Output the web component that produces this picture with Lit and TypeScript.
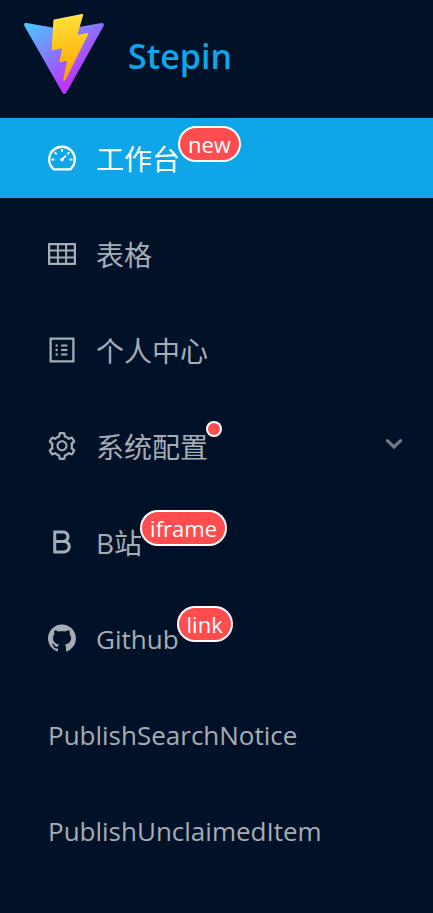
import { LitElement, html, css, svg, nothing } from "lit";
import { customElement, state } from "lit/decorators.js";
import { classMap } from "lit/directives/class-map.js";

interface MenuEntry {
  key: string;
  label: string;
  icon?: string;
  badge?: string;
  dot?: boolean;
  group?: boolean;
}

const ICONS: Record<string, string> = {
  dashboard:
    "M924.8 385.6a446.7 446.7 0 00-96-142.4 446.7 446.7 0 00-142.4-96C631.1 123.8 572.5 112 512 112s-119.1 11.8-174.4 35.2a446.7 446.7 0 00-142.4 96 446.7 446.7 0 00-96 142.4C75.8 440.9 64 499.5 64 560c0 132.7 58.3 257.7 159.9 343.1l1.7 1.4c5.8 4.8 13.1 7.5 20.6 7.5h531.7c7.5 0 14.8-2.7 20.6-7.5l1.7-1.4C901.7 817.7 960 692.7 960 560c0-60.5-11.9-119.1-35.2-174.4zM761.4 836H262.6A371.12 371.12 0 01140 560c0-99.4 38.7-192.8 109-263 70.3-70.3 163.7-109 263-109 99.4 0 192.8 38.7 263 109 70.3 70.3 109 163.7 109 263 0 105.6-44.5 205.5-122.6 276zM623.5 421.5a8.03 8.03 0 00-11.3 0L527.7 506c-18.7-5-39.4-.2-54.1 14.5a55.95 55.95 0 000 79.2 55.95 55.95 0 0079.2 0 55.87 55.87 0 0014.5-54.1l84.5-84.5c3.1-3.1 3.1-8.2 0-11.3l-28.3-28.3zM490 320h44c4.4 0 8-3.6 8-8v-80c0-4.4-3.6-8-8-8h-44c-4.4 0-8 3.6-8 8v80c0 4.4 3.6 8 8 8zm260 218v44c0 4.4 3.6 8 8 8h80c4.4 0 8-3.6 8-8v-44c0-4.4-3.6-8-8-8h-80c-4.4 0-8 3.6-8 8zm12.7-197.2l-31.1-31.1a8.03 8.03 0 00-11.3 0l-56.6 56.6a8.03 8.03 0 000 11.3l31.1 31.1c3.1 3.1 8.2 3.1 11.3 0l56.6-56.6c3.1-3.1 3.1-8.2 0-11.3zm-458.6-31.1a8.03 8.03 0 00-11.3 0l-31.1 31.1a8.03 8.03 0 000 11.3l56.6 56.6c3.1 3.1 8.2 3.1 11.3 0l31.1-31.1c3.1-3.1 3.1-8.2 0-11.3l-56.6-56.6zM262 530h-80c-4.4 0-8 3.6-8 8v44c0 4.4 3.6 8 8 8h80c4.4 0 8-3.6 8-8v-44c0-4.4-3.6-8-8-8z",
  table:
    "M928 160H96c-17.7 0-32 14.3-32 32v640c0 17.7 14.3 32 32 32h832c17.7 0 32-14.3 32-32V192c0-17.7-14.3-32-32-32zm-40 208H676V232h212v136zm0 224H676V432h212v160zM412 432h200v160H412V432zm200-64H412V232h200v136zm-476 64h212v160H136V432zm0-200h212v136H136V232zm0 424h212v136H136V656zm276 0h200v136H412V656zm476 136H676V656h212v136z",
  profile:
    "M880 112H144c-17.7 0-32 14.3-32 32v736c0 17.7 14.3 32 32 32h736c17.7 0 32-14.3 32-32V144c0-17.7-14.3-32-32-32zm-40 728H184V184h656v656zM492 400h184c4.4 0 8-3.6 8-8v-48c0-4.4-3.6-8-8-8H492c-4.4 0-8 3.6-8 8v48c0 4.4 3.6 8 8 8zm0 144h184c4.4 0 8-3.6 8-8v-48c0-4.4-3.6-8-8-8H492c-4.4 0-8 3.6-8 8v48c0 4.4 3.6 8 8 8zm0 144h184c4.4 0 8-3.6 8-8v-48c0-4.4-3.6-8-8-8H492c-4.4 0-8 3.6-8 8v48c0 4.4 3.6 8 8 8zM340 368m-40 0a40 40 0 1080 0 40 40 0 10-80 0zM340 512m-40 0a40 40 0 1080 0 40 40 0 10-80 0zM340 656m-40 0a40 40 0 1080 0 40 40 0 10-80 0z",
  setting:
    "M924.8 625.7l-65.5-56c3.1-19 4.7-38.4 4.7-57.8s-1.6-38.8-4.7-57.8l65.5-56a32.03 32.03 0 009.3-35.2l-.9-2.6a443.74 443.74 0 00-79.7-137.9l-1.8-2.1a32.12 32.12 0 00-35.1-9.5l-81.3 28.9c-30-24.6-63.5-44-99.7-57.6l-15.7-85a32.05 32.05 0 00-25.8-25.7l-2.7-.5c-52.1-9.4-106.9-9.4-159 0l-2.7.5a32.05 32.05 0 00-25.8 25.7l-15.8 85.4a351.86 351.86 0 00-99 57.4l-81.9-29.1a32 32 0 00-35.1 9.5l-1.8 2.1a446.02 446.02 0 00-79.7 137.9l-.9 2.6c-4.5 12.5-.8 26.5 9.3 35.2l66.3 56.6c-3.1 18.8-4.6 38-4.6 57.1 0 19.2 1.5 38.4 4.6 57.1L99 625.5a32.03 32.03 0 00-9.3 35.2l.9 2.6c18.1 50.4 44.9 96.9 79.7 137.9l1.8 2.1a32.12 32.12 0 0035.1 9.5l81.9-29.1c29.8 24.5 63.1 43.9 99 57.4l15.8 85.4a32.05 32.05 0 0025.8 25.7l2.7.5a449.4 449.4 0 00159 0l2.7-.5a32.05 32.05 0 0025.8-25.7l15.7-85a350 350 0 0099.7-57.6l81.3 28.9a32 32 0 0035.1-9.5l1.8-2.1c34.8-41.1 61.6-87.5 79.7-137.9l.9-2.6c4.5-12.3.8-26.3-9.3-35zM788.3 465.9c2.5 15.1 3.8 30.6 3.8 46.1s-1.3 31-3.8 46.1l-6.6 40.1 74.7 63.9a370.03 370.03 0 01-42.6 73.6L721 702.8l-31.4 25.8c-23.9 19.6-50.5 35-79.3 45.8l-38.1 14.3-17.9 97a377.5 377.5 0 01-85 0l-17.9-97.2-37.8-14.5c-28.5-10.8-55-26.2-78.7-45.7l-31.4-25.9-93.4 33.2c-17-22.9-31.2-47.6-42.6-73.6l75.5-64.5-6.5-40c-2.4-14.9-3.7-30.3-3.7-45.5 0-15.3 1.2-30.6 3.7-45.5l6.5-40-75.5-64.5c11.3-26.1 25.6-50.7 42.6-73.6l93.4 33.2 31.4-25.9c23.7-19.5 50.2-34.9 78.7-45.7l37.9-14.3 17.9-97.2c28.1-3.2 56.8-3.2 85 0l17.9 97 38.1 14.3c28.7 10.8 55.4 26.2 79.3 45.8l31.4 25.8 92.8-32.9c17 22.9 31.2 47.6 42.6 73.6L781.8 426l6.5 39.9zM512 326c-97.2 0-176 78.8-176 176s78.8 176 176 176 176-78.8 176-176-78.8-176-176-176zm79.2 255.2A111.6 111.6 0 01512 614c-29.9 0-58-11.7-79.2-32.8A111.6 111.6 0 01400 502c0-29.9 11.7-58 32.8-79.2C454 401.6 482.1 390 512 390c29.9 0 58 11.6 79.2 32.8A111.6 111.6 0 01624 502c0 29.9-11.7 58-32.8 79.2z",
  bold:
    "M697.8 481.4c33.6-35 54.2-82.3 54.2-134.3v-10.2C752 229.3 663.9 142 555.3 142H259.4c-15.1 0-27.4 12.3-27.4 27.4v679.1c0 16.3 13.2 29.5 29.5 29.5h318.7c117 0 211.8-94.2 211.8-210.5v-11c0-73-37.4-137.3-94.2-175.1zM328 238h224.7c57.1 0 103.3 44.4 103.3 99.3v9.5c0 54.8-46.3 99.3-103.3 99.3H328V238zm366.6 429.4c0 62.9-51.7 113.9-115.5 113.9H328V542.7h251.1c63.8 0 115.5 51 115.5 113.9v10.8z",
  github:
    "M511.6 76.3C264.3 76.2 64 276.4 64 523.5 64 718.9 189.3 885 363.8 946c23.5 5.9 19.9-10.8 19.9-22.2v-77.5c-135.7 15.9-141.2-73.9-150.3-88.9C215 726 171.5 718 184.5 703c30.9-15.9 62.4 4 98.9 57.9 26.4 39.1 77.9 32.5 104 26 5.7-23.5 17.9-44.5 34.7-60.8-140.6-25.2-199.2-111-199.2-213 0-49.5 16.3-95 48.3-131.7-20.4-60.5 1.9-112.3 4.9-120 58.1-5.2 118.5 41.6 123.2 45.3 33-8.9 70.7-13.6 112.9-13.6 42.4 0 80.2 4.9 113.5 13.9 11.3-8.6 67.3-48.8 121.3-43.9 2.9 7.7 24.7 58.3 5.5 118 32.4 36.8 48.9 82.7 48.9 132.3 0 102.2-59 188.1-200 212.9a127.5 127.5 0 0138.1 91v112.5c.8 9 0 17.9 15 17.9 177.1-59.7 304.6-227 304.6-424.1 0-247.2-200.4-447.3-447.5-447.3z",
};

const ENTRIES: MenuEntry[] = [
  { key: "workplace", label: "工作台", icon: "dashboard", badge: "new" },
  { key: "table", label: "表格", icon: "table" },
  { key: "personal", label: "个人中心", icon: "profile" },
  { key: "system", label: "系统配置", icon: "setting", dot: true, group: true },
  { key: "bilibili", label: "B站", icon: "bold", badge: "iframe" },
  { key: "github", label: "Github", icon: "github", badge: "link" },
  { key: "publish-search-notice", label: "PublishSearchNotice" },
  { key: "publish-unclaimed-item", label: "PublishUnclaimedItem" },
];

@customElement("app-logo")
export class AppLogo extends LitElement {
  static styles = css`
    :host {
      display: flex;
      align-items: center;
      gap: 24px;
      padding: 14px 24px 16px;
    }
    .mark {
      flex: none;
      width: 80px;
      height: 80px;
    }
    .name {
      margin: 0;
      padding-top: 4px;
      color: #0fa5e9;
      font-size: 34px;
      font-weight: 600;
      line-height: 48px;
    }
  `;

  render() {
    return html`
      <svg class="mark" viewBox="9 1 392 393" aria-hidden="true">
        <defs>
          <linearGradient id="shield" gradientUnits="userSpaceOnUse" x1="6" y1="33" x2="235" y2="344">
            <stop stop-color="#41d1ff" />
            <stop offset="1" stop-color="#bd34fe" />
          </linearGradient>
          <linearGradient id="bolt" gradientUnits="userSpaceOnUse" x1="194.651" y1="8.818" x2="236.076" y2="292.989">
            <stop stop-color="#ffea83" />
            <stop offset="0.083" stop-color="#ffdd35" />
            <stop offset="1" stop-color="#ffa800" />
          </linearGradient>
        </defs>
        <path
          fill="url(#shield)"
          d="M399.641 59.5246L215.643 388.545C211.844 395.338 202.084 395.378 198.228 388.618L10.5817 59.5563C6.38087 52.1896 12.6802 43.2665 21.0281 44.7586L205.223 77.6824C206.398 77.8924 207.601 77.8904 208.776 77.6763L389.119 44.8058C397.439 43.2894 403.768 52.1434 399.641 59.5246Z"
        />
        <path
          fill="url(#bolt)"
          d="M292.965 1.5744L156.801 28.2552C154.563 28.6937 152.906 30.5903 152.771 32.8664L144.395 174.33C144.198 177.662 147.258 180.248 150.51 179.498L188.42 170.749C191.967 169.931 195.172 173.055 194.443 176.622L183.18 231.775C182.422 235.487 185.907 238.661 189.532 237.56L212.947 230.446C216.577 229.344 220.065 232.527 219.297 236.242L201.398 322.875C200.278 328.294 207.486 331.249 210.492 326.603L212.5 323.5L323.454 102.072C325.312 98.3645 322.108 94.137 318.036 94.9228L279.014 102.454C275.347 103.161 272.227 99.746 273.262 96.1583L298.731 7.86689C299.767 4.27314 296.636 0.855181 292.965 1.5744Z"
        />
      </svg>
      <h1 class="name">Stepin</h1>
    `;
  }
}

@customElement("app-root")
export class AppRoot extends LitElement {
  static styles = css`
    :host {
      display: block;
      box-sizing: border-box;
      min-height: 100vh;
      background: #001128;
      color: #a6adb4;
      font-family: "Open Sans", "Noto Sans CJK SC", sans-serif;
    }
    .menu {
      display: flex;
      flex-direction: column;
      gap: 16px;
      margin: 0;
      padding: 8px 0;
      list-style: none;
    }
    .item {
      display: flex;
      align-items: center;
      gap: 20px;
      box-sizing: border-box;
      width: 100%;
      height: 80px;
      padding: 0 28px 0 48px;
      border: 0;
      background: none;
      color: inherit;
      font-family: inherit;
      font-size: 28px;
      line-height: 40px;
      text-align: left;
      text-decoration: none;
      cursor: pointer;
    }
    .item.latin {
      font-size: 26px;
    }
    .item.active {
      background: #0fa5e9;
      color: #ffffff;
    }
    .icon {
      flex: none;
      width: 28px;
      height: 28px;
      fill: currentColor;
    }
    .label {
      position: relative;
      padding-top: 2px;
      white-space: nowrap;
    }
    .badge {
      position: absolute;
      top: -9px;
      left: 100%;
      height: 32px;
      padding: 0 8px;
      border-radius: 16px;
      background: #ff4d4f;
      box-shadow: 0 0 0 2px #ffffff;
      color: #ffffff;
      font-size: 22px;
      line-height: 33px;
    }
    .dot {
      position: absolute;
      top: -2px;
      left: 100%;
      width: 12px;
      height: 12px;
      border-radius: 50%;
      background: #ff4d4f;
      box-shadow: 0 0 0 2px #ffffff;
    }
    .arrow {
      flex: none;
      width: 20px;
      height: 16px;
      margin-left: auto;
      fill: none;
      stroke: #737b86;
      stroke-width: 3.2;
    }
  `;

  @state() private active = "workplace";
  @state() private expanded = false;

  private select(event: Event, key: string) {
    event.preventDefault();
    this.active = key;
  }

  private content(entry: MenuEntry) {
    return html`
      ${entry.icon
        ? html`<svg class="icon" viewBox="64 64 896 896" aria-hidden="true">
            ${svg`<path d=${ICONS[entry.icon]} />`}
          </svg>`
        : nothing}
      <span class="label"
        >${entry.label}${entry.badge ? html`<span class="badge">${entry.badge}</span>` : nothing}${entry.dot
          ? html`<span class="dot"></span>`
          : nothing}</span
      >
    `;
  }

  private row(entry: MenuEntry) {
    if (entry.group) {
      return html`<button
        class="item"
        type="button"
        aria-expanded=${this.expanded ? "true" : "false"}
        @click=${() => (this.expanded = !this.expanded)}
      >
        ${this.content(entry)}
        <svg class="arrow" viewBox="0 0 20 16" aria-hidden="true">
          <path d="M2.4 2.6L9 9l6.600-6.400" stroke-linecap="round" />
        </svg>
      </button>`;
    }
    const classes = {
      item: true,
      latin: /^[A-Za-z]+$/.test(entry.label),
      active: entry.key === this.active,
    };
    return html`<a
      class=${classMap(classes)}
      href="#${entry.key}"
      aria-current=${entry.key === this.active ? "page" : "false"}
      @click=${(event: Event) => this.select(event, entry.key)}
      >${this.content(entry)}</a
    >`;
  }

  render() {
    return html`
      <app-logo></app-logo>
      <nav>
        <ul class="menu">
          ${ENTRIES.map((entry) => html`<li>${this.row(entry)}</li>`)}
        </ul>
      </nav>
    `;
  }
}
